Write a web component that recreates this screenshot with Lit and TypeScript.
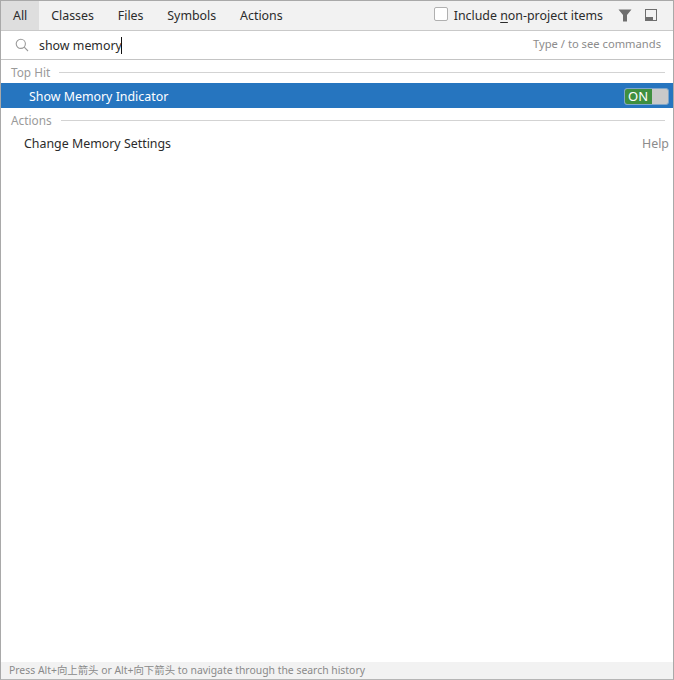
import { LitElement, html, css } from "lit";
import { customElement } from "lit/decorators.js";

@customElement("app-root")
export class AppRoot extends LitElement {
  static styles = css`
    :host {
      display: flex;
      flex-direction: column;
      width: 674px;
      height: 680px;
      box-sizing: border-box;
      border: 1px solid #a9a9a9;
      border-bottom: 1px solid #b5b5b5;
      background: #fff;
      color: #2b2b2b;
      font-family: "Noto Sans", "Noto Sans CJK SC", sans-serif;
      font-size: 12.4px;
      overflow: hidden;
    }
    .tabs {
      display: flex;
      align-items: stretch;
      height: 29px;
      flex: none;
      background: #f2f2f2;
      border-bottom: 1px solid #c9c9c9;
    }
    .tab {
      display: flex;
      align-items: center;
      padding: 0 11.9px;
      white-space: nowrap;
    }
    .tab.on {
      background: #dedede;
      padding: 0 12px;
    }
    .opts {
      margin-left: auto;
      display: flex;
      align-items: center;
    }
    .box {
      width: 12px;
      height: 12px;
      border: 1px solid #b0b0b0;
      border-radius: 2px;
      background: #fff;
      margin-right: 6px;
      margin-bottom: 3px;
    }
    .opts u {
      text-underline-offset: 2px;
    }
    .filter {
      margin-left: 15px;
      display: block;
    }
    .pin {
      margin-left: 13px;
      margin-right: 15px;
      display: block;
    }
    .search {
      display: flex;
      align-items: center;
      height: 28px;
      flex: none;
      border-bottom: 1px solid #c4c4c4;
      padding: 0 12px 0 14px;
    }
    .search svg {
      display: block;
      margin-right: 10px;
    }
    .query {
      display: flex;
      align-items: center;
    }
    .caret {
      width: 1px;
      height: 17px;
      background: #111;
      margin-left: -1px;
    }
    .hint {
      margin-left: auto;
      color: #8c8c8c;
      font-size: 11.2px;
      padding-bottom: 3px;
    }
    .group {
      display: flex;
      align-items: center;
      height: 24px;
      padding: 0 8px 0 10px;
      color: #9a9a9a;
      font-size: 11.8px;
      flex: none;
    }
    .group i {
      flex: 1;
      height: 1px;
      background: #d3d3d3;
      margin-left: 9px;
    }
    .hit {
      display: flex;
      align-items: center;
      justify-content: space-between;
      height: 25px;
      flex: none;
      margin-top: -1px;
      background: #2675bf;
      color: #fff;
      padding: 2px 4px 0 28px;
      box-sizing: border-box;
    }
    .toggle {
      display: flex;
      width: 45px;
      height: 17px;
      border-radius: 3px;
      overflow: hidden;
      background: #c9c9c9;
      border: 1px solid #7fa6c9;
      box-sizing: border-box;
    }
    .toggle b {
      width: 27px;
      background: #3f8f3f;
      color: #fff;
      font-weight: 400;
      font-size: 13px;
      line-height: 15px;
      padding-left: 3px;
      box-sizing: border-box;
    }
    .row {
      display: flex;
      align-items: center;
      justify-content: space-between;
      height: 22px;
      flex: none;
      padding: 0 4px 0 23px;
    }
    .row span:last-child {
      color: #8c8c8c;
    }
    .spacer {
      flex: 1;
    }
    .foot {
      height: 17px;
      flex: none;
      background: #f2f2f2;
      color: #8a8a8a;
      font-size: 10.4px;
      line-height: 17px;
      padding-left: 8px;
    }
  `;

  render() {
    return html`
      <div class="tabs">
        <div class="tab on">All</div>
        <div class="tab">Classes</div>
        <div class="tab">Files</div>
        <div class="tab">Symbols</div>
        <div class="tab">Actions</div>
        <div class="opts">
          <span class="box"></span>
          <span>Include <u>n</u>on-project items</span>
          <svg class="filter" width="14" height="13" viewBox="0 0 14 13">
            <path d="M0.5 0.5H13.5L9 6V12.5H5V6Z" fill="#6e6e6e" />
          </svg>
          <svg class="pin" width="13" height="13" viewBox="0 0 13 13">
            <rect x="0.5" y="0.5" width="11" height="11" fill="none" stroke="#6e6e6e" />
            <rect x="1" y="8" width="7" height="4" fill="#6e6e6e" />
          </svg>
        </div>
      </div>
      <div class="search">
        <svg width="14" height="14" viewBox="0 0 14 14" fill="none" stroke="#9a9a9a" stroke-width="1.1">
          <circle cx="5.8" cy="5.8" r="4.6" />
          <path d="M9.2 9.2L13 13" />
        </svg>
        <span class="query">show memory<span class="caret"></span></span>
        <span class="hint">Type / to see commands</span>
      </div>
      <div class="group">Top Hit<i></i></div>
      <div class="hit">
        <span>Show Memory Indicator</span>
        <span class="toggle"><b>ON</b></span>
      </div>
      <div class="group">Actions<i></i></div>
      <div class="row"><span>Change Memory Settings</span><span>Help</span></div>
      <div class="spacer"></div>
      <div class="foot">Press Alt+向上箭头 or Alt+向下箭头 to navigate through the search history</div>
    `;
  }
}
